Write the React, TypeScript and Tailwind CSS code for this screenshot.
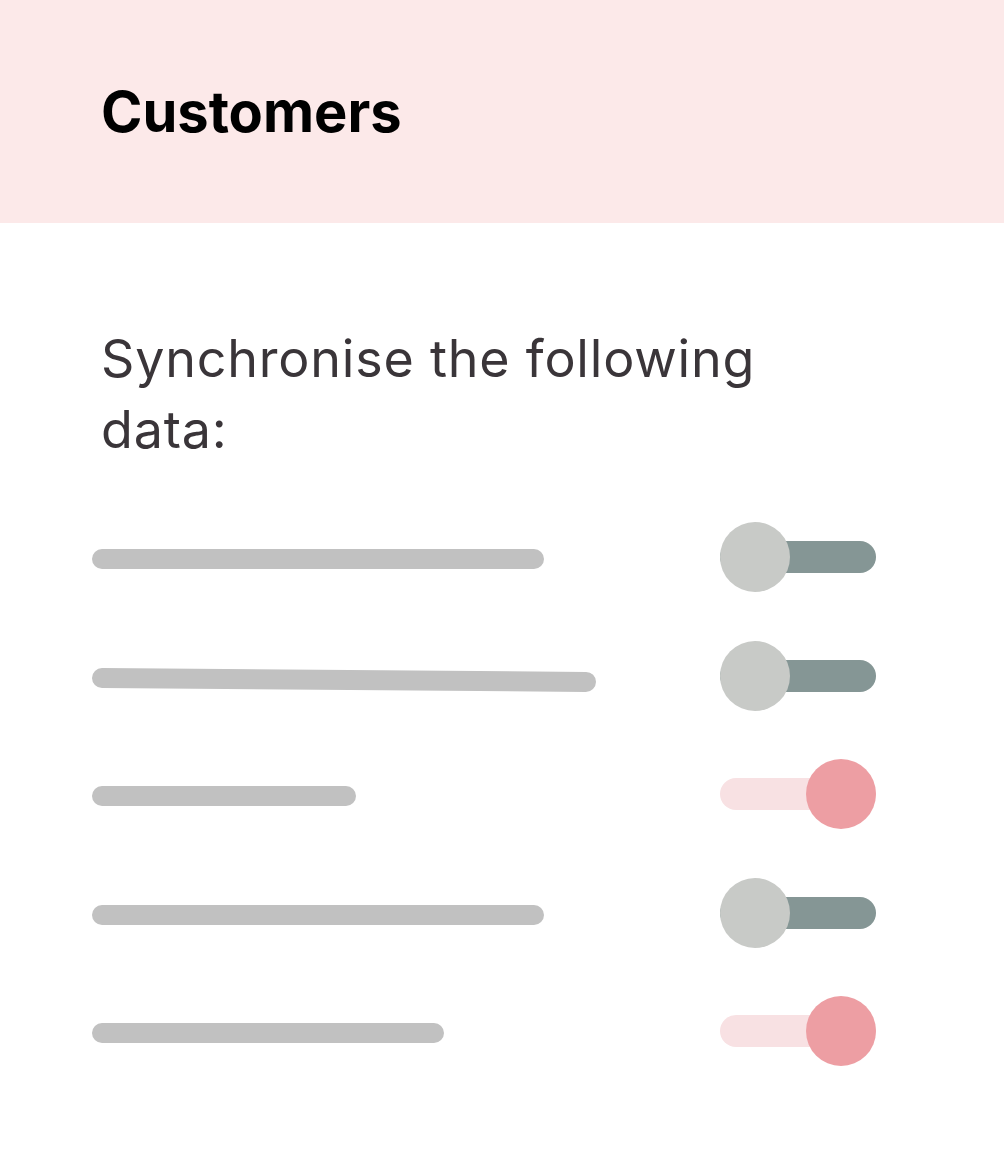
import React from "react";

type Row = {
  width: number;
  on: boolean;
  tilt?: boolean;
};

const rows: Row[] = [
  { width: 452, on: false },
  { width: 504, on: false, tilt: true },
  { width: 264, on: true },
  { width: 452, on: false },
  { width: 352, on: true },
];

const Toggle = ({ on }: { on: boolean }) => {
  if (on) {
    return (
      <div className="relative w-[156px] h-[70px] flex items-center">
        <div className="w-full h-[32px] rounded-full bg-[#f8e1e3]" />
        <div className="absolute right-0 top-0 w-[70px] h-[70px] rounded-full bg-[#ed9ea3]" />
      </div>
    );
  }
  return (
    <div className="relative w-[156px] h-[70px] flex items-center">
      <div className="w-full h-[32px] rounded-full bg-[#859695]" />
      <div className="absolute left-0 top-0 w-[70px] h-[70px] rounded-full bg-[#c8cac7]" />
    </div>
  );
};

export default function App() {
  return (
    <div
      className="w-[1004px] h-[1164px] bg-white"
      style={{ fontFamily: "Inter, 'Noto Sans', sans-serif" }}
    >
      <header className="h-[223px] bg-[#fce9e9] flex items-center pl-[101px]">
        <h1 className="text-[56px] leading-none font-bold text-black">
          Customers
        </h1>
      </header>

      <main className="pt-[100px] pl-[92px] pr-[128px]">
        <p className="pl-[9px] text-[52px] leading-[71px] tracking-[0.8px] text-[#3a3539] w-[720px]">
          Synchronise the following data:
        </p>

        <ul className="mt-[57px] flex flex-col gap-[48.5px]">
          {rows.map((row, i) => (
            <li key={i} className="flex items-center justify-between h-[70px]">
              <div
                className={
                  row.tilt
                    ? "mt-[4px] h-[20px] rounded-full bg-[#c1c1c1] rotate-[0.45deg] origin-left"
                    : "mt-[4px] h-[20px] rounded-full bg-[#c1c1c1]"
                }
                style={{ width: row.width }}
              />
              <Toggle on={row.on} />
            </li>
          ))}
        </ul>
      </main>
    </div>
  );
}
